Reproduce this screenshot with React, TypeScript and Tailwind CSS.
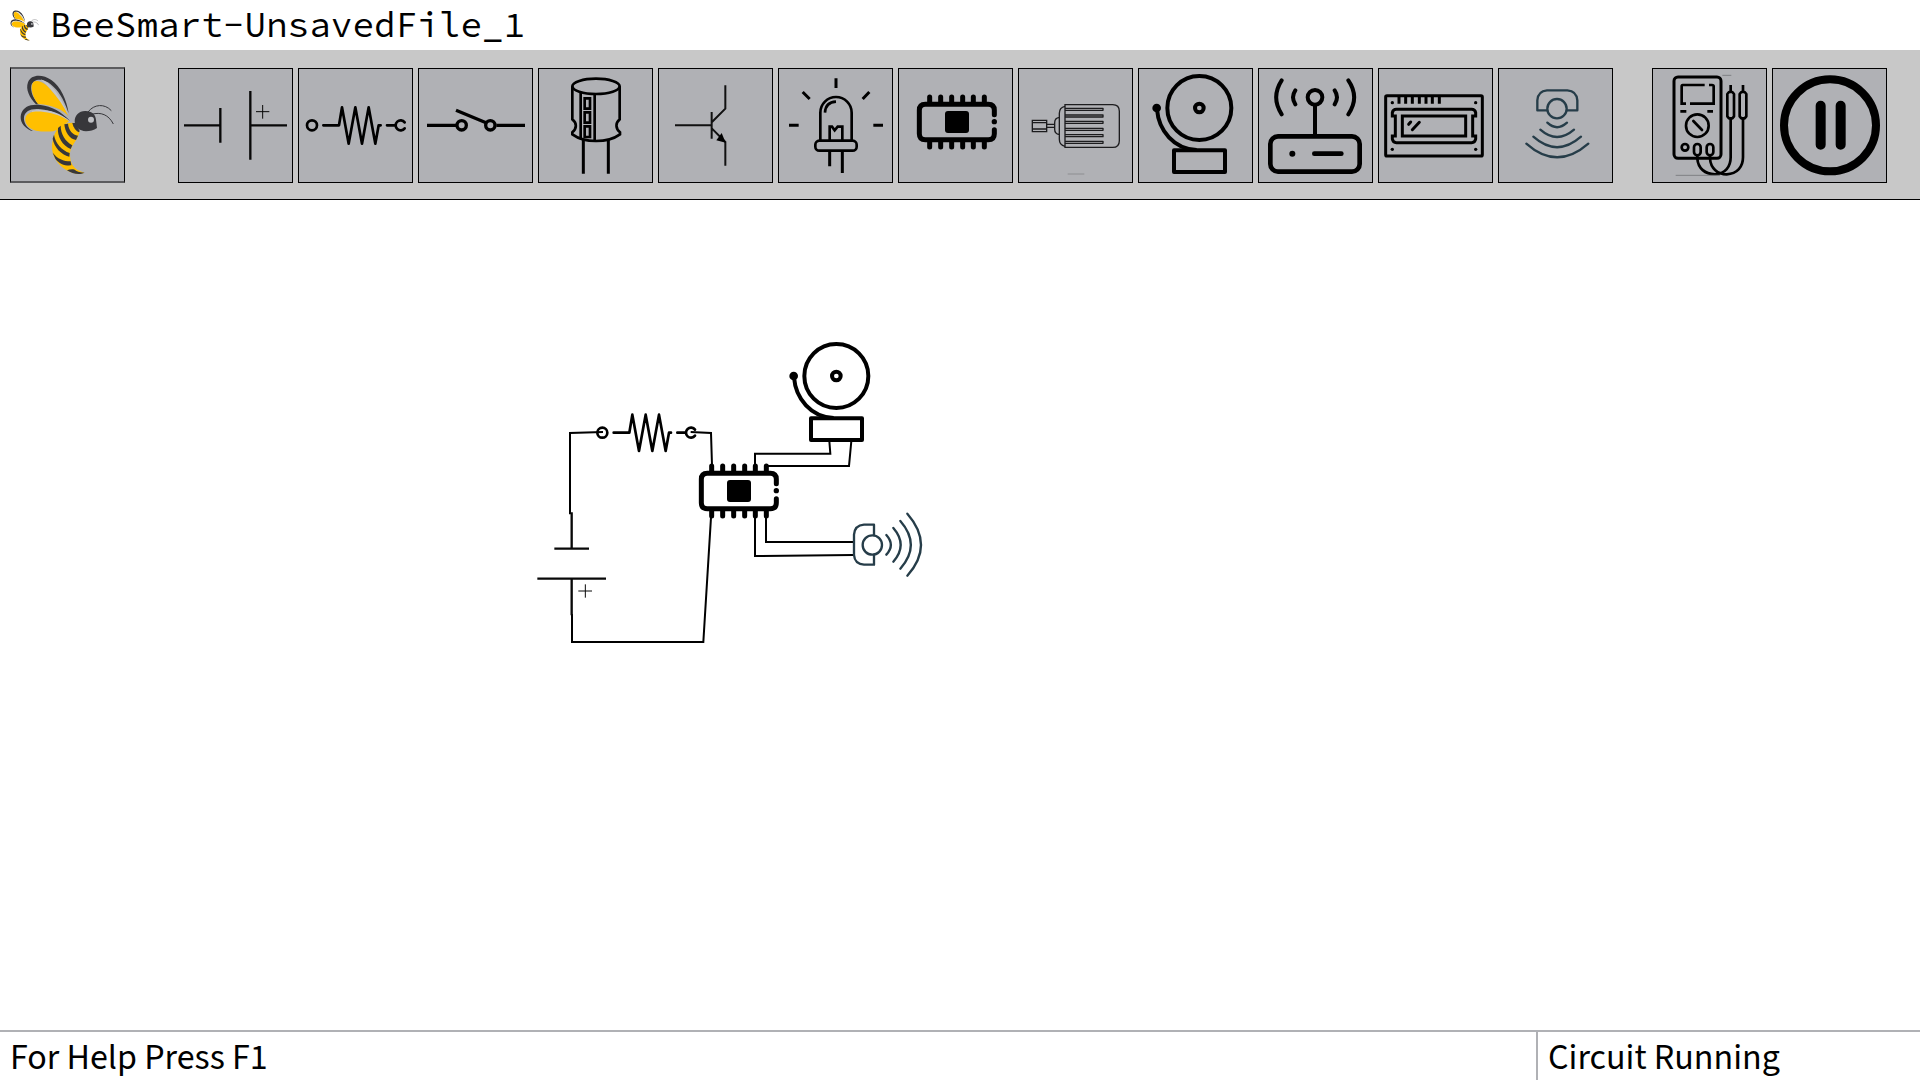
import type { ReactNode } from "react";

const sensorColor = "#263d49";

function BeeArt() {
  return (
    <g>
      <path d="M108 163C88 143 76 118 84 97C93 72 128 72 154 90C182 110 200 148 206 190L203 182C190 145 175 122 152 103C130 84 101 84 94 106C91 126 100 146 116 163Z" fill="#37373b" />
      <path d="M122 88C150 96 180 134 204 192C186 168 168 130 122 88Z" fill="#c4c5c8" />
      <path d="M114 162C96 138 90 110 100 96C115 86 136 100 152 119C174 143 192 169 205 198C188 180 162 165 114 162Z" fill="#ffbf00" />
      <path d="M93 242C70 232 58 214 63 193C70 169 92 161 122 165C154 169 186 186 210 213C180 193 152 182 122 178C92 174 76 184 72 200C70 218 80 234 99 242Z" fill="#37373b" />
      <path d="M96 182C130 176 176 182 208 213C172 196 136 188 96 186Z" fill="#c4c5c8" />
      <path d="M207 214C188 227 176 240 160 244C142 245 124 245 108 242C86 237 69 217 78 199C87 184 107 183 132 186C162 190 190 199 207 214Z" fill="#ffbf00" />
      <path d="M180 228C192 221 205 218 219 218L239 243C236 268 213 284 210 308C209 338 218 358 253 368C236 375 216 370 200 361C174 344 155 320 156 287C158 262 166 242 180 228Z" fill="#ffbf00" />
      <g fill="#37373b">
        <path d="M217 219L226 219L239 243L237 247C228 244 220 232 217 219Z" />
        <path d="M193 223L204 221C206 241 218 254 234 257L228 270C208 267 195 246 193 223Z" />
        <path d="M174 234L182 227C182 252 196 274 217 286L212 297C188 288 171 259 174 234Z" />
        <path d="M162 254L158 266C162 291 183 314 208 320L209 309C186 301 166 280 162 254Z" />
        <path d="M158 308C172 326 190 334 212 334L214 346C196 348 178 342 166 326Z" />
        <path d="M201 361C212 357 222 357 228 362C237 367 246 366 254 368C237 376 217 371 201 361Z" />
        <path d="M224 214C224 195 238 182 257 183C276 183 287 195 288 209L291 234Q276 244 258 244C238 243 224 231 224 214Z" />
      </g>
      <circle cx="273" cy="209" r="9" fill="#bfc0c4" />
      <path d="M264 186C282 162 314 160 334 182M275 193C302 185 326 194 340 222" fill="none" stroke="#37373b" strokeWidth="3" />
    </g>
  );
}

function BatteryArt() {
  return (
    <g stroke="#080808" strokeWidth="7" fill="none">
      <path d="M552 226H661M661 174V278M751 123V329M751 226H861" />
      <path d="M768 185H808M788 165V206" strokeWidth="3" />
    </g>
  );
}

function ResistorArt() {
  return (
    <g stroke="#000" strokeWidth="8" fill="none" strokeLinecap="round" strokeLinejoin="round">
      <circle cx="66" cy="226" r="15" />
      <path d="M100 226H147L156 172L176 281L196 172L216 281L236 172L256 281L266 226H272M291 226H316" />
      <path d="M344 217A15 15 0 1 0 344 235" />
    </g>
  );
}

function SwitchArt() {
  return (
    <g stroke="#000" strokeWidth="10" fill="none">
      <circle cx="515" cy="226" r="14" />
      <circle cx="601" cy="226" r="14" />
      <path d="M411 226H498M619 226H705M498 181L590 219" />
    </g>
  );
}

function CapacitorArt() {
  return (
    <g stroke="#000" strokeWidth="8" fill="none">
      <ellipse cx="198" cy="109" rx="71" ry="23" />
      <path d="M127 109V208C142 219 140 236 127 247V253C145 266 168 273 198 273C228 273 252 266 270 253V247C257 236 255 219 269 208V109" />
      <path d="M152 127V268M194 132V272" />
      <path d="M164 145H180V176H164ZM164 187H180V218H164ZM164 229H180V261H164Z" />
      <path d="M160 270V371M235 270V371" strokeWidth="9" />
    </g>
  );
}

function TransistorArt() {
  return (
    <g stroke="#111" strokeWidth="6" fill="none">
      <path d="M435 226H544M545 186V266M546 216L586 176V106M546 236L586 276V347" />
      <path d="M587 278L559 271L575 249Z" fill="#000" stroke="none" />
    </g>
  );
}

function LedArt() {
  return (
    <g stroke="#000" strokeWidth="8" fill="none">
      <path d="M198 85V114M98 126L119 147M298 126L278 147M57 226H86M310 226H339" strokeWidth="9" />
      <path d="M151 270V188A47 47 0 0 1 245 188V270" />
      <path d="M165 188C166 168 178 156 198 155" />
      <path d="M179 270V230H186L194 241L203 230H217V270" />
      <rect x="136" y="272" width="124" height="30" rx="12" />
      <path d="M179 302V349M217 302V369" strokeWidth="9" />
    </g>
  );
}

function ChipArt() {
  return (
    <g stroke="#000" strokeWidth="15" fill="none" strokeLinecap="round">
      <path d="M673 194V181Q673 163 655 163H466Q448 163 448 181V251Q448 269 466 269H655Q673 269 673 251V239" />
      <path d="M479 141V160M512 141V160M545 141V160M578 141V160M610 141V160M643 141V160M479 272V291M512 272V291M545 272V291M578 272V291M610 272V291M643 272V291" />
      <circle cx="673" cy="215" r="8" fill="#000" stroke="none" />
      <rect x="525" y="183" width="72" height="66" rx="9" fill="#000" stroke="none" />
    </g>
  );
}

function MotorArt() {
  return (
    <g stroke="#1c1c1e" strokeWidth="4" fill="none">
      <path d="M67 211H110V245H67ZM67 218H110M67 237H110" />
      <path d="M110 223H134M110 232H134" />
      <path d="M148 202Q134 204 134 218V238Q134 252 148 254M165 169Q148 172 148 190V268Q148 286 165 289" />
      <path d="M165 164H308Q328 164 328 184V272Q328 292 308 292H165Z" />
      <path d="M165 175H279V181H165M165 195H279V201H165M165 214H279V220H165M165 235H279V241H165M165 254H279V260H165M165 274H279V280H165" strokeLinejoin="round" />
      <path d="M173 372H223" stroke="#96979b" />
    </g>
  );
}

function BellArt() {
  return (
    <g stroke="#000" strokeWidth="12" fill="none">
      <circle cx="568" cy="174" r="96" />
      <circle cx="568" cy="174" r="13" />
      <circle cx="440" cy="174" r="13" fill="#000" stroke="none" />
      <path d="M441 178C446 242 492 297 560 300" />
      <rect x="492" y="301" width="153" height="65" strokeLinejoin="round" />
    </g>
  );
}

function RouterArt() {
  return (
    <g stroke="#000" strokeWidth="12" fill="none" strokeLinecap="round">
      <circle cx="195" cy="142" r="22" />
      <path d="M195 168V255" />
      <rect x="61" y="259" width="268" height="106" rx="23" strokeWidth="14" />
      <circle cx="127" cy="311" r="9" fill="#000" stroke="none" />
      <path d="M193 311H274" strokeWidth="14" />
      <path d="M136 121Q122 142 136 163M254 121Q268 142 254 163M95 91Q62 142 95 193M295 91Q330 142 295 193" />
    </g>
  );
}

function DisplayArt() {
  return (
    <g stroke="#000" strokeWidth="9" fill="none">
      <rect x="407" y="137" width="290" height="181" rx="4" />
      <path d="M447 140V161M467 140V161M487 140V161M508 140V161M528 140V161M547 140V161M568 140V161" />
      <g fill="#000" stroke="none">
        <circle cx="427" cy="158" r="5" />
        <circle cx="677" cy="158" r="5" />
        <circle cx="427" cy="298" r="5" />
        <circle cx="677" cy="298" r="5" />
      </g>
      <path d="M427 198V188Q429 178 439 178H665Q675 178 677 188V198H668V258H677V267Q675 278 665 278H439Q429 278 427 267V258H436V198Z" />
      <rect x="457" y="198" width="190" height="60" />
      <path d="M487 239L508 217M476 223L482 216" strokeLinecap="round" />
    </g>
  );
}

function SensorArt() {
  return (
    <g stroke={sensorColor} strokeWidth="7" fill="none" strokeLinecap="round" strokeLinejoin="round">
      <path d="M171 181H142V151Q144 123 171 121H232Q260 123 262 151V181H231" />
      <circle cx="201" cy="176" r="29" />
      <path d="M172 218Q201 245 231 218M151 239Q201 283 252 239M130 260Q201 323 273 260M109 281Q201 363 295 281" />
    </g>
  );
}

function MultimeterArt() {
  return (
    <g stroke="#000" strokeWidth="8" fill="none">
      <rect x="552" y="81" width="141" height="244" rx="12" strokeWidth="9" />
      <path d="M644 105H578Q575 105 575 109V161H588M600 161H671V109Q671 105 666 105H657M571 184H589M652 184H669" />
      <circle cx="622" cy="227" r="34" />
      <path d="M610 213L636 240" strokeLinecap="round" />
      <circle cx="585" cy="292" r="10" />
      <rect x="612" y="282" width="20" height="34" rx="10" />
      <rect x="650" y="282" width="20" height="34" rx="10" />
      <path d="M622 316V326C624 356 646 372 674 373C706 372 722 350 722 322V205M660 316V326C662 356 684 373 710 373C742 372 759 350 759 322V205" />
      <path d="M717 126H727L732 132V199L727 205H717L712 199V132ZM754 126H764L769 132V199L764 205H754L749 199V132Z" strokeLinejoin="round" />
      <path d="M722 105V126M759 105V126" />
      <path d="M697 76H724M557 376H690" stroke="#7f8084" strokeWidth="3" />
    </g>
  );
}

function PauseArt() {
  return (
    <g fill="none" stroke="#000">
      <circle cx="1020" cy="226" r="138" strokeWidth="24" />
      <path d="M992 167V284M1052 167V284" strokeWidth="30" strokeLinecap="round" />
    </g>
  );
}

type Tool = { label: string; viewBox: string; art: ReactNode };

const componentTools: Tool[] = [
  { label: "Battery", viewBox: "537 57 339 339", art: <BatteryArt /> },
  { label: "Resistor", viewBox: "27 57 339 339", art: <ResistorArt /> },
  { label: "Switch", viewBox: "387 57 339 339", art: <SwitchArt /> },
  { label: "Capacitor", viewBox: "27 57 339 339", art: <CapacitorArt /> },
  { label: "Transistor", viewBox: "387 57 339 339", art: <TransistorArt /> },
  { label: "LED", viewBox: "27 57 339 339", art: <LedArt /> },
  { label: "Microcontroller", viewBox: "387 57 339 339", art: <ChipArt /> },
  { label: "Motor", viewBox: "27 57 339 339", art: <MotorArt /> },
  { label: "Buzzer", viewBox: "387 57 339 339", art: <BellArt /> },
  { label: "Wireless module", viewBox: "27 57 339 339", art: <RouterArt /> },
  { label: "LCD display", viewBox: "387 57 339 339", art: <DisplayArt /> },
  { label: "Motion sensor", viewBox: "27 57 339 339", art: <SensorArt /> },
];

const runTools: Tool[] = [
  { label: "Multimeter", viewBox: "489 57 339 339", art: <MultimeterArt /> },
  { label: "Pause simulation", viewBox: "849 57 339 339", art: <PauseArt /> },
];

function ToolButton({ tool }: { tool: Tool }) {
  return (
    <button type="button" aria-label={tool.label} className="size-[115px] shrink-0 border border-black bg-[#b0b1b5]">
      <svg viewBox={tool.viewBox} className="block size-full" aria-hidden="true">
        {tool.art}
      </svg>
    </button>
  );
}

function Circuit() {
  return (
    <svg viewBox="0 0 1260 990" className="absolute top-[130px] left-[520px] h-[330px] w-[420px]" role="img" aria-label="Circuit">
      <g stroke="#000" strokeWidth="6" fill="none">
        <path d="M249 306L150 309V553" />
        <path d="M512 306L573 309L576 405" />
        <path d="M705 405V371H931L928 333" />
        <path d="M739 408H987L994 333" />
        <path d="M573 562L550 936H156V852" />
        <path d="M705 562V678L1000 675" />
        <path d="M738 562V636H1000" />
      </g>
      <g transform="translate(381 -5) rotate(90)">
        <BatteryArt />
      </g>
      <g transform="translate(181 82)">
        <ResistorArt />
      </g>
      <g transform="translate(96 267)">
        <ChipArt />
      </g>
      <g transform="translate(381 -36)">
        <BellArt />
      </g>
      <g transform="translate(881 846) rotate(-90)">
        <SensorArt />
      </g>
    </svg>
  );
}

export default function App() {
  return (
    <div className="flex min-h-screen flex-col bg-white text-black">
      <header className="flex h-[50px] items-center gap-[11px] pl-[10px]">
        <svg viewBox="57 75 286 300" className="h-[31px] w-[29px] shrink-0" aria-hidden="true">
          <BeeArt />
        </svg>
        <h1 className="font-['Source_Code_Pro','Liberation_Mono',monospace] text-[36px] leading-[50px] font-normal whitespace-nowrap">
          BeeSmart-UnsavedFile_1
        </h1>
      </header>

      <nav aria-label="Components" className="flex h-[150px] items-end border-b border-black bg-[#c8c8c8] pb-4 pl-[10px]">
        <button type="button" aria-label="BeeSmart menu" className="h-[116px] w-[115px] shrink-0 border-x border-y-2 border-x-black border-y-[#5c5c5e] bg-[#b0b1b5]">
          <svg viewBox="33 57 339 336" className="block size-full" aria-hidden="true">
            <BeeArt />
          </svg>
        </button>
        <div className="ml-[53px] flex gap-[5px]">
          {componentTools.map((tool) => (
            <ToolButton key={tool.label} tool={tool} />
          ))}
        </div>
        <div className="ml-[39px] flex gap-[5px]">
          {runTools.map((tool) => (
            <ToolButton key={tool.label} tool={tool} />
          ))}
        </div>
      </nav>

      <main className="relative flex-1 overflow-hidden">
        <Circuit />
      </main>

      <footer className="flex h-[50px] border-t-2 border-[#b0b1b5] font-['Source_Sans_Pro','Source_Sans_3','Noto_Sans_CJK_SC',sans-serif] text-[36px] leading-[44px]">
        <p className="flex-1 pt-1 pl-[10px]">For Help Press F1</p>
        <p className="w-1/5 border-l-2 border-[#b0b1b5] pt-1 pl-[10px]">Circuit Running</p>
      </footer>
    </div>
  );
}
